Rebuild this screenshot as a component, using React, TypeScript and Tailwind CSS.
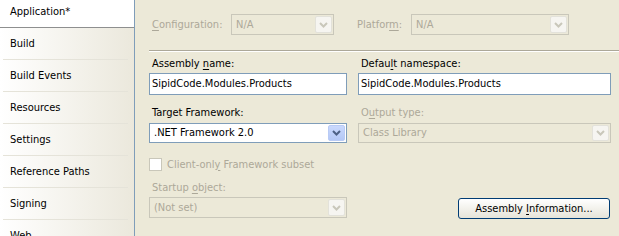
import React from "react";

const FONT = { fontFamily: "'DejaVu Sans Condensed', 'Liberation Sans', sans-serif" };

function Arrow({ color }: { color: string }) {
  return (
    <svg width="9" height="6" viewBox="0 0 9 6">
      <polyline points="1,1 4.5,4.5 8,1" fill="none" stroke={color} strokeWidth="2" />
    </svg>
  );
}

function Combo({ value, enabled, w, h }: { value: string; enabled?: boolean; w: string; h: string }) {
  return (
    <div
      className={`${w} ${h} flex items-stretch border p-px ${
        enabled ? "border-[#7f9db9] bg-white text-black" : "border-[#c9c7ba] bg-[#ece9d8] text-[#aca899]"
      }`}
    >
      <div className="flex-1 flex items-center pl-[3px] whitespace-nowrap overflow-hidden">{value}</div>
      <div
        className={`w-[17px] flex items-center justify-center rounded-[2px] border ${
          enabled
            ? "border-[#b9cbf5] bg-gradient-to-b from-[#cad9fd] to-[#b4c8f6]"
            : "border-[#e3e2da] bg-[#f6f5f1]"
        }`}
      >
        <Arrow color={enabled ? "#4d6185" : "#c9c7ba"} />
      </div>
    </div>
  );
}

function U({ children }: { children: React.ReactNode }) {
  return <span className="underline underline-offset-2">{children}</span>;
}

const items = ["Build", "Build Events", "Resources", "Settings", "Reference Paths", "Signing", "Web"];

export default function App() {
  return (
    <div className="w-[619px] h-[236px] overflow-hidden flex bg-[#ece9d8] text-[11px] leading-[14px]" style={FONT}>
      <div className="w-[135px] shrink-0 border-r border-[#7f9db9] bg-gradient-to-r from-[#ffffff] to-[#ebe8dc] flex flex-col">
        <div className="h-[28px] shrink-0 bg-white border-b border-[#8e8f8f] flex items-center pl-[10px] pb-[3px] text-black">
          Application*
        </div>
        {items.map((it, i) => (
          <div key={it} className="h-[32px] shrink-0 flex flex-col">
            <div className="flex-1 flex items-center pl-[10px] text-black">{it}</div>
            {i < items.length - 1 && <div className="h-px ml-[3px] w-[125px] bg-[#e5e3d9]" />}
          </div>
        ))}
      </div>

      <div className="flex-1 flex flex-col pt-[14px] pl-[14px]">
        <div className="flex items-center h-[21px] text-[#aca899]">
          <div className="w-[82px] pl-[3px]">
            <U>C</U>onfiguration:
          </div>
          <Combo value="N/A" w="w-[103px]" h="h-[21px]" />
          <div className="w-[54px] ml-[23px]">
            Platfor<U>m</U>:
          </div>
          <Combo value="N/A" w="w-[158px]" h="h-[21px]" />
        </div>

        <div className="mt-[15px] h-[2px] border-t border-[#aca899] border-b border-b-white" />

        <div className="grid grid-cols-[198px_253px] gap-x-[11px] mt-[5px]">
          <div className="pl-[3px] h-[14px]">
            Assembly <U>n</U>ame:
          </div>
          <div className="pl-[3px] h-[14px]">
            Defau<U>l</U>t namespace:
          </div>
          <div className="mt-[2px] h-[22px] border border-[#7f9db9] bg-white flex items-center pl-[2px]">
            SipidCode.Modules.Products
          </div>
          <div className="mt-[2px] h-[22px] border border-[#7f9db9] bg-white flex items-center pl-[2px]">
            SipidCode.Modules.Products
          </div>

          <div className="pl-[3px] h-[14px] mt-[11px]">Target Framework:</div>
          <div className="pl-[3px] h-[14px] mt-[11px] text-[#aca899]">
            O<U>u</U>tput type:
          </div>
          <div className="mt-[3px]">
            <Combo value=".NET Framework 2.0" enabled w="w-[198px]" h="h-[20px]" />
          </div>
          <div className="mt-[3px]">
            <Combo value="Class Library" w="w-[253px]" h="h-[20px]" />
          </div>

          <div className="col-span-2 mt-[15px] h-[13px] flex items-center text-[#aca899]">
            <div className="w-[13px] h-[13px] border border-[#c9c7ba] bg-white" />
            <span className="ml-[5px]">
              Client-onl<U>y</U> Framework subset
            </span>
          </div>

          <div className="pl-[3px] h-[14px] mt-[10px] text-[#aca899]">
            Startup <U>o</U>bject:
          </div>
          <div className="mt-[10px]" />
          <div className="mt-[2px]">
            <Combo value="(Not set)" w="w-[198px]" h="h-[21px]" />
          </div>
          <div className="mt-[3px] flex justify-end pr-px">
            <div className="w-[152px] h-[21px] rounded-[3px] border border-[#003c74] bg-gradient-to-b from-[#ffffff] to-[#e6e4d9] flex items-center justify-center text-black">
              <span>
                Assembly <U>I</U>nformation...
              </span>
            </div>
          </div>
        </div>
      </div>
    </div>
  );
}
